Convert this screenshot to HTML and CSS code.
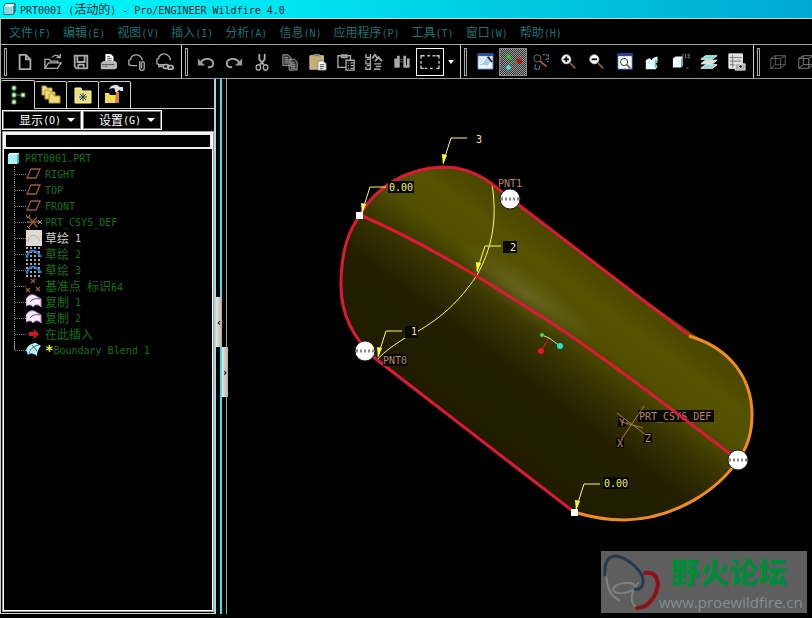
FILE: index.html
```html
<!DOCTYPE html>
<html lang="zh-CN">
<head>
    <meta charset="utf-8">
    <title>PRT0001 (活动的) - Pro/ENGINEER Wildfire 4.0</title>
    <link rel="stylesheet" href="styles.css">
</head>
<body>
    <header class="titlebar">
        <svg class="title-icon" viewBox="0 0 14 14"><path d="M1 4l2-3h10v9l-2 3H1z" fill="#e8ffff" stroke="#245"/><path d="M1.500 4.500h9v8h-9z" fill="#8fd8dc"/><path d="M11 4v9l2-3V1z" fill="#467"/></svg>
        <h1>PRT0001 (<span class="zh">活动的</span>) - Pro/ENGINEER Wildfire 4.0</h1>
    </header>

    <nav class="menubar">
        <button><span class="zh">文件</span>(F)</button>
        <button><span class="zh">编辑</span>(E)</button>
        <button><span class="zh">视图</span>(V)</button>
        <button><span class="zh">插入</span>(I)</button>
        <button><span class="zh">分析</span>(A)</button>
        <button><span class="zh">信息</span>(N)</button>
        <button><span class="zh">应用程序</span>(P)</button>
        <button><span class="zh">工具</span>(T)</button>
        <button><span class="zh">窗口</span>(W)</button>
        <button><span class="zh">帮助</span>(H)</button>
    </nav>

    <div class="toolbar">
        <div class="tool-group">
            <button aria-label="新建"><svg viewBox="0 0 20 20"><path d="M4 2h7l5 5v11H4zM11 2v5h5" stroke-width="2"/></svg></button>
            <button aria-label="打开"><svg viewBox="0 0 20 20"><path d="M1 17V7h5l1 2h8v2M1 17l4-6h14l-4 6zM9 5c2-3 5-3 8-1M18 1v4h-4" stroke-width="1.500"/></svg></button>
            <button aria-label="保存"><svg viewBox="0 0 20 20"><path d="M3 3h14v14H5l-2-2zM6 3v7h8V3M7 17v-4h6v4" stroke-width="2"/></svg></button>
            <button aria-label="打印"><svg viewBox="0 0 20 20"><path d="M6 10V1h6l3 3v6z" fill="#fff" stroke="none"/><path d="M8 4h3M8 6h5M8 8h5" stroke="#555"/><path d="M1 11l3-2h13l2 2v5l-2 2H1z" fill="#bbb" stroke="none"/><path d="M2 13h14" stroke="#444"/><path d="M3 15h2" stroke="#2a2"/><path d="M6 15h2" stroke="#c22"/></svg></button>
            <button aria-label="发送邮件"><svg viewBox="0 0 20 20"><path d="M4 14l-3-1V8l2-1c0-3 3-5 6-5s6 2 7 6M4 14h6M13 9v8c0 3 5 3 5 0v-6c0-2-3-2-3 0v6" stroke-width="1.500"/></svg></button>
            <button aria-label="发送链接"><svg viewBox="0 0 20 20"><path d="M4 13l-3-1V7l2-1c0-3 3-5 6-5s7 3 7 7M4 13h5M3 13v2h4" stroke-width="1.500"/><rect x="8" y="13" width="6" height="4" rx="2" stroke-width="2"/><rect x="13" y="14" width="6" height="4" rx="2" stroke-width="2"/></svg></button>
        </div>
        <div class="tool-group">
            <button aria-label="撤消"><svg viewBox="0 0 20 20"><path d="M4 11c4-7 14-5 14 1 0 3-3 4-6 4" stroke-width="2"/><path d="M1 6v8h8z" fill="#999" stroke="none"/></svg></button>
            <button aria-label="重做"><svg viewBox="0 0 20 20"><path d="M16 11C12 4 2 6 2 12c0 3 3 4 6 4" stroke-width="2"/><path d="M19 6v8h-8z" fill="#999" stroke="none"/></svg></button>
            <button aria-label="剪切"><svg viewBox="0 0 20 20"><path d="M7 1v6l5 6M13 1v6l-5 6" stroke-width="2"/><ellipse cx="6" cy="16" rx="2.500" ry="3" stroke-width="1.500"/><ellipse cx="14" cy="16" rx="2.500" ry="3" stroke-width="1.500"/></svg></button>
            <button aria-label="复制"><svg viewBox="0 0 20 20"><path d="M2 2h6l3 3v9H2zM9 7h6l3 3v9H9z" fill="#333" /><path d="M4 5h4M4 7h4M4 9h4M4 11h4M11 11h4M11 13h5M11 15h5M11 17h5"/></svg></button>
            <button aria-label="粘贴"><svg viewBox="0 0 20 20"><path d="M1 3h15v15H1z" fill="#c4ad70" stroke="#ddd09c"/><path d="M5 4V2h2l1-1 2 1h2v2z" fill="#777"/><path d="M10 9h6l3 3v7h-9z" fill="#fff" stroke="#888"/><path d="M12 13h5M12 15h5M12 17h4" stroke="#445"/></svg></button>
            <button aria-label="选择性粘贴"><svg viewBox="0 0 20 20"><path d="M10 16H1V3h14v5M5 5V2h6v3zM10 8h9v11h-9zM12 11h1M12 14h1M12 17h1M15 11h3M15 14h3M15 17h3" stroke-width="1.500"/></svg></button>
            <button aria-label="再生"><svg viewBox="0 0 20 20"><path d="M1 1v4h5V1M6 4v3H2M1 8v4h5V8M6 11v3H2M1 15v3h5v-3M10 12h8M12 15h6M10 18h7" stroke-width="1.500"/><path d="M8 6l3-4 3 4 2-2M11 9l4-4 4 4" stroke-width="2"/></svg></button>
            <button aria-label="查找"><svg viewBox="0 0 20 20"><path d="M3 6v10M6 3v13M13 3v13M17 6v10M2 15h5M12 15h6" stroke-width="3"/><path d="M8 7h4M8 10h4" stroke="#666"/></svg></button>
            <button class="framed" aria-label="选取框"><svg viewBox="0 0 20 20"><path d="M0 6V3h4M7 3h3M13 3h3M17 3h3v3M20 9v3M20 14v3h-3M13 17h-3M7 17H4M3 17H0v-3M0 12V9" stroke="#ccc" stroke-width="1.500"/></svg></button>
            <button class="caret" aria-label="选取选项"><svg viewBox="0 0 6 4"><path d="M0 0h6L3 4z" fill="#fff" stroke="none"/></svg></button>
        </div>
        <div class="tool-group">
            <button aria-label="重画"><svg viewBox="0 0 20 20"><path d="M2 1h17v17H2z" fill="#eef8ff" stroke="#2857a8"/><path d="M2 2h17" stroke="#2857a8" stroke-width="3"/><path d="M12 5l5 4-4 5-7-1z" fill="#a8d0ea" stroke="none"/><path d="M13 4l5 6" stroke="#223" stroke-width="2"/><path d="M4 6h1M6 8h1M4 10h1M8 6h1M5 13h1" stroke="#38c"/></svg></button>
            <button class="pressed" aria-label="旋转中心"><svg viewBox="0 0 20 20"><path d="M5 5l4 5h7M9 10l-4 5" stroke="#2a4" /><circle cx="5" cy="4" r="2.500" fill="#2c2" stroke="none"/><circle cx="17" cy="9" r="3" fill="#c01010" stroke="none"/><circle cx="5" cy="16" r="2.500" fill="#4dd" stroke="none"/></svg></button>
            <button aria-label="定向模式"><svg viewBox="0 0 20 20"><circle cx="6" cy="6" r="4" stroke="#777"/><path d="M9 9l7 6" stroke="#a65b36" stroke-width="2"/><path d="M12 2h6v5h-4M4 13l-1 5h5l1-5M17 9l2 2" stroke="#89c6f0" stroke-dasharray="2 1"/></svg></button>
            <button aria-label="放大"><svg viewBox="0 0 20 20"><path d="M11 11l6 6" stroke="#8c5944" stroke-width="2"/><circle cx="7" cy="7" r="5" fill="#fff" stroke="#ccc"/><path d="M4 7h6M7 4v6" stroke="#000" stroke-width="2"/></svg></button>
            <button aria-label="缩小"><svg viewBox="0 0 20 20"><path d="M11 11l6 6" stroke="#8c5944" stroke-width="2"/><circle cx="7" cy="7" r="5" fill="#fff" stroke="#ccc"/><path d="M4 7h6" stroke="#000" stroke-width="2"/></svg></button>
            <button aria-label="重新调整"><svg viewBox="0 0 20 20"><path d="M2 1h16v17H2z" fill="#fff" stroke="#2444a0"/><path d="M1 2h18" stroke="#2444a0" stroke-width="3"/><circle cx="9" cy="10" r="4" stroke="#222"/><path d="M12 13l4 4" stroke="#8c5944" stroke-width="2"/></svg></button>
            <button aria-label="重定向"><svg viewBox="0 0 20 20"><path d="M2 8l3-2h2l1 2 3-3 4-1v6l-2 2 2 3-2 3H2z" fill="#e8fffc" stroke="none"/><path d="M12 8v9l3-3-2-2 2-4z" fill="#5bb" stroke="none"/></svg></button>
            <button aria-label="已保存视图"><svg viewBox="0 0 20 20"><path d="M1 6l3-2h8v10l-2 2H1z" fill="#f4ffff" stroke="none"/><path d="M10 7l2-3v10l-2 2z" fill="#59a9a9" stroke="none"/><path d="M12 1v5M15 1v5M19 1v5M17 2h2M17 5h2" stroke="#888"/><path d="M15 16h4l-2 2z" fill="#555" stroke="none"/></svg></button>
            <button aria-label="层"><svg viewBox="0 0 20 20"><path d="M6 3h13l-5 4H1z" fill="#8adada" stroke="#dff"/><path d="M6 8h13l-5 4H1z" fill="#ddd" stroke="#fff"/><path d="M6 13h13l-5 4H1z" fill="#8adada" stroke="#fff"/></svg></button>
            <button aria-label="视图管理器"><svg viewBox="0 0 20 20"><path d="M1 1h15v16H1z" fill="#ddd" stroke="#fff"/><path d="M2 5h13M2 9h13M2 13h13M5 2v14" stroke="#777"/><path d="M8 12h11v7H8z" fill="#aaa" stroke="#eee"/><circle cx="14" cy="15" r="2" fill="#111" stroke="#fff"/></svg></button>
        </div>
        <div class="tool-group">
            <button aria-label="线框"><svg viewBox="0 0 20 20"><path d="M2 6h11v11H2zM7 3h11v10H7zM2 6l5-3M13 6l5-3M13 17l5-4M2 17l5-4" stroke="#666"/></svg></button>
            <button aria-label="隐藏线"><svg viewBox="0 0 20 20"><path d="M2 6h11v11H2zM7 3h11v10H7zM2 6l5-3M13 6l5-3M13 17l5-4M2 17l5-4" stroke="#888"/></svg></button>
        </div>
    </div>

    <main class="workspace">
        <aside class="navigator">
            <div class="tabs">
                <button class="tab active" aria-label="模型树"><svg viewBox="0 0 22 22"><path d="M7 4v14M7 11h8" stroke="#5c8a5c" fill="none"/><path d="M5 2h4v4H5zM5 9h4v4H5zM5 16h4v4H5zM14 9h4v4h-4z" fill="#d6ffd6" stroke="#3a7a3a"/></svg></button>
                <button class="tab" aria-label="文件夹浏览器"><svg viewBox="0 0 22 22"><g fill="#f2dc78" stroke="#b59c3c"><path d="M2 4V2h4l1 2h5v7H2z"/><path d="M5 8V6h4l1 2h5v7H5z"/><path d="M9 12v-2h4l1 2h6v7H9z"/></g></svg></button>
                <button class="tab" aria-label="收藏夹"><svg viewBox="0 0 22 22"><path d="M3 7V4h6l1 3h9v12H3z" fill="#eedf78" stroke="#fff6b0"/><path d="M11 9v8M7 13h8M8 10l6 6M14 10l-6 6" stroke="#1b3f78"/></svg></button>
                <button class="tab" aria-label="连接"><svg viewBox="0 0 22 22"><path d="M1 11V9h4l1 2h7v8H1z" fill="#f2dc50"/><path d="M5 5c2-4 5-4 8-4l3 2h3v4h-2l-2-1-2 2h-2V5L9 4z" fill="#dde3e8"/><path d="M12 8h3v11h-4z" fill="#d97c3c"/></svg></button>
            </div>
            <div class="drop-buttons">
                <button><span class="zh">显示</span>(O)<i class="arrow"></i></button>
                <button><span class="zh">设置</span>(G)<i class="arrow"></i></button>
            </div>
            <div class="tree-panel">
                <input type="text" class="tree-search" aria-label="搜索">
                <div class="tree-root"><svg viewBox="0 0 14 14"><path d="M1 3l2-2h10v10l-2 2H1z" fill="#a8f0f0"/><path d="M11 3l2-2v10l-2 2z" fill="#4aa"/><path d="M1 3h10l2-2H3z" fill="#e8ffff"/></svg>PRT0001.PRT</div>
                <ul class="tree">
                    <li><svg viewBox="0 0 16 16"><path d="M5 3h9l-4 9H1z" class="datum"/></svg>RIGHT</li>
                    <li><svg viewBox="0 0 16 16"><path d="M5 3h9l-4 9H1z" class="datum"/></svg>TOP</li>
                    <li><svg viewBox="0 0 16 16"><path d="M5 3h9l-4 9H1z" class="datum"/></svg>FRONT</li>
                    <li><svg viewBox="0 0 16 16"><path d="M1 8h12M3 3l8 10M11 3L3 13" class="datum"/><path d="M0 1l2 3 2-3M12 6l4 4M16 6l-4 4M1 12l3 3" stroke="#999" fill="none"/></svg>PRT_CSYS_DEF</li>
                    <li class="selected"><svg viewBox="0 0 16 16"><path d="M0 0h16v16H0z" fill="#dedad6"/><path d="M2 12c1-8 8-9 12-1" stroke="#b5a78f" fill="none"/></svg><span class="zh">草绘</span> 1</li>
                    <li><svg viewBox="0 0 16 16"><path d="M0 2h16M0 6h16M0 10h16M0 14h16" stroke="#dde" stroke-width="1.500" stroke-dasharray="2 2"/><path d="M1 12C2 3 10 2 15 11" stroke="#267bd0" stroke-width="2" fill="none"/></svg><span class="zh">草绘</span> 2</li>
                    <li><svg viewBox="0 0 16 16"><path d="M0 2h16M0 6h16M0 10h16M0 14h16" stroke="#dde" stroke-width="1.500" stroke-dasharray="2 2"/><path d="M1 12C2 3 10 2 15 11" stroke="#267bd0" stroke-width="2" fill="none"/></svg><span class="zh">草绘</span> 3</li>
                    <li><svg viewBox="0 0 16 16"><path d="M5 1l4 4M9 1L5 5M0 10l4 4M4 10l-4 4M10 9l4 4M14 9l-4 4" class="datum"/></svg><span><span class="zh">基准点</span> <span class="zh">标识</span>64</span></li>
                    <li><svg viewBox="0 0 16 16"><path d="M0 5c3-5 7-5 10-3l5 3v8c-3-3-6-3-8 0-1-2-3-3-7-1z" fill="#fbeaff" stroke="#b68cc8"/><path d="M4 8c2-3 6-4 10-3" stroke="#555" fill="none"/></svg><span class="zh">复制</span> 1</li>
                    <li><svg viewBox="0 0 16 16"><path d="M0 5c3-5 7-5 10-3l5 3v8c-3-3-6-3-8 0-1-2-3-3-7-1z" fill="#fbeaff" stroke="#b68cc8"/><path d="M4 8c2-3 6-4 10-3" stroke="#555" fill="none"/></svg><span class="zh">复制</span> 2</li>
                    <li><svg viewBox="0 0 16 16"><path d="M3 6h5V3l5 5-5 5v-3H3z" fill="#d01818"/></svg><span class="zh">在此插入</span></li>
                    <li><svg viewBox="0 0 16 16"><path d="M0 8c2-5 6-7 10-7l5 3c-3 3-4 6-4 10-4-3-7-3-9-1z" fill="#b8f2f2"/><path d="M3 11c2-5 5-7 10-8M6 3l5 6" stroke="#377" fill="none"/></svg><span class="flag">*</span>Boundary Blend 1</li>
                </ul>
            </div>
        </aside>
        <div class="sash">
            <button class="sash-left" aria-label="收起">‹</button>
            <button class="sash-right" aria-label="展开">›</button>
        </div>

        <section class="viewport">
            <svg class="model" viewBox="228 79 584 539" preserveAspectRatio="xMinYMin meet">
                <defs>
                    <linearGradient id="body" gradientUnits="userSpaceOnUse" x1="475" y1="435" x2="600" y2="267">
                        <stop offset="0" stop-color="#201c00"/>
                        <stop offset=".35" stop-color="#231f00"/>
                        <stop offset=".55" stop-color="#393600"/>
                        <stop offset=".7" stop-color="#525000"/>
                        <stop offset=".85" stop-color="#555200"/>
                        <stop offset="1" stop-color="#4a4700"/>
                    </linearGradient>
                    <radialGradient id="shine">
                        <stop offset="0" stop-color="#8a8a58" stop-opacity=".35"/>
                        <stop offset="1" stop-color="#8a8a58" stop-opacity="0"/>
                    </radialGradient>
                    <g id="knob">
                        <circle r="10" fill="#fff" stroke="#222"/>
                        <path d="M-9 0H9" stroke="#888" stroke-width="3" stroke-dasharray="2 2"/>
                    </g>
                    <path id="leader" d="M24 0H8L0 25" fill="none" stroke="#ffff50"/>
                    <path id="head" d="M0 27l-1-11 5 1z" fill="#ffff30"/>
                </defs>

                <path d="M376 359C350 336 340 310 341 281C342 250 348 232 360 215C375 188 405 168 443 167C465 167 480 175 492 184L511 199L632 291L702 340C734 354 752 380 752 415C752 430 748 447 738 460C718 490 675 519 624 520C605 520 590 517 574 512Z" fill="url(#body)"/>
                <ellipse cx="525" cy="293" rx="85" ry="22" transform="rotate(35 525 293)" fill="url(#shine)"/>

                <path class="section" d="M492 184C498 222 491 250 477 275C453 312 425 328 405 338C394 345 385 351 378 359"/>
                <path class="edge" d="M574 512L376 359C350 336 340 310 341 281C342 250 348 232 360 215C375 188 405 168 443 167C465 167 480 175 492 184L511 199L690 336"/>

                <use href="#leader" x="443" y="138"/><use href="#head" x="443" y="138"/>
                <use href="#leader" x="362" y="187"/><use href="#head" x="362" y="187"/>
                <use href="#leader" x="477" y="246"/><use href="#head" x="477" y="246"/>
                <use href="#leader" x="378" y="331"/><use href="#head" x="378" y="331"/>
                <use href="#leader" x="576" y="484"/><use href="#head" x="576" y="484"/>

                <g class="tags">
                    <rect x="388" y="181" width="26" height="12"/>
                    <rect x="503" y="241" width="14" height="12"/>
                    <rect x="405" y="326" width="13" height="12"/>
                    <rect x="383" y="354" width="25" height="12"/>
                    <rect x="603" y="477" width="26" height="12"/>
                    <rect x="638" y="410" width="76" height="12"/>
                    <rect x="618" y="417" width="8" height="10"/>
                    <rect x="616" y="438" width="8" height="10"/>
                    <rect x="644" y="433" width="8" height="10"/>
                </g>
                <g class="dims">
                    <text x="476" y="143">3</text>
                    <text x="389" y="191">0.00</text>
                    <text x="510" y="251">2</text>
                    <text x="411" y="335">1</text>
                    <text x="604" y="487">0.00</text>
                </g>
                <g class="names">
                    <text x="498" y="187">PNT1</text>
                    <text x="383" y="364">PNT0</text>
                    <text x="639" y="420">PRT_CSYS_DEF</text>
                    <text x="619" y="426">Y</text>
                    <text x="617" y="447">X</text>
                    <text x="645" y="442">Z</text>
                </g>
                <path class="csys" d="M617 413L646 435M644 406L621 440M622 422L643 428"/>

                <path class="edge" d="M360 215C430 245 500 290 550 322S690 423 738 460"/>
                <path class="edge active" d="M689 336C730 348 752 378 752 415C752 430 748 447 738 460C718 490 675 519 624 520C605 520 590 517 574 512"/>

                <g class="spin">
                    <path d="M549 338L541 351" stroke="#d02020"/>
                    <path d="M542 335L549 338L560 346" stroke="#b8e8c0"/>
                    <circle cx="542" cy="335" r="2" fill="#4dd83c"/>
                    <circle cx="541" cy="351" r="3" fill="#f01028"/>
                    <circle cx="560" cy="346" r="3" fill="#28e0d0"/>
                </g>

                <use href="#knob" x="510" y="199"/>
                <use href="#knob" x="365" y="351"/>
                <use href="#knob" x="738" y="460"/>
                <path class="grip" d="M356 212h7v7h-7zM571 509h7v7h-7z"/>
            </svg>
            <div class="watermark">
                <svg viewBox="0 0 60 62">
                    <g fill="none" stroke-linecap="round">
                        <path d="M5 22C6 38 10 45 18 49" stroke="#808080" stroke-width="2"/>
                        <ellipse cx="23" cy="37" rx="11" ry="5" transform="rotate(-10 23 37)" stroke="#808080" stroke-width="2"/>
                        <path d="M38 57C28 55 29 42 37 32" stroke="#808080" stroke-width="2"/>
                        <path d="M4 24C3 10 8 5 15 5C28 7 44 22 42 32C41 37 38 39 34 38" stroke="#26384c" stroke-width="3"/>
                        <path d="M44 22C58 20 60 35 52 47C47 54 43 57 36 57" stroke="#8e1018" stroke-width="4"/>
                    </g>
                </svg>
                <div class="watermark-text">
                    <strong>野火论坛</strong>
                    <a href="#">www.proewildfire.cn</a>
                </div>
            </div>
        </section>
    </main>
</body>
</html>
```
FILE: styles.css
```css
*,
*::before {
    box-sizing: border-box;
}

body {
    margin: 0;
    min-height: 100vh;
    display: flex;
    flex-direction: column;
    background: #000;
    font: 10px "DejaVu Sans Mono", "Noto Sans CJK SC", monospace;
    overflow-x: hidden;
}

button {
    margin: 0;
    padding: 0;
    border: 0;
    background: none;
    color: inherit;
    font: inherit;
}

svg {
    display: block;
    flex: none;
}

.zh {
    font-family: "Noto Sans CJK SC", sans-serif;
    font-size: 12px;
    line-height: 14px;
}

.titlebar {
    display: flex;
    align-items: center;
    gap: 4px;
    height: 19px;
    padding-left: 3px;
    background: linear-gradient(90deg, #00f8fc, #00e4f0 35%, #00a8d0);
    border-bottom: 1px solid #c8d4c8;
    color: #00282c;
}

.titlebar h1 {
    margin: 0;
    font-size: 10px;
    font-weight: normal;
    white-space: pre;
}

.title-icon {
    width: 13px;
    height: 14px;
}

/* menus */
.menubar {
    display: flex;
    align-items: center;
    gap: 12px;
    height: 26px;
    padding-left: 8px;
    border-left: 1px solid #aaa;
    border-bottom: 1px solid #aaa;
    color: #1d7272;
    white-space: nowrap;
}

/* toolbar */
.toolbar {
    display: flex;
    height: 34px;
    overflow: hidden;
    border-bottom: 1px solid #999;
    border-left: 1px solid #aaa;
}

.tool-group {
    display: flex;
    flex: none;
    align-items: center;
    padding: 0 2px 0 3px;
    border-right: 1px solid #ccc;
}

.tool-group:last-child {
    border-right: 0;
}

.tool-group::before {
    content: "";
    width: 3px;
    height: 28px;
    margin-right: 4px;
    border: 1px solid #aaa;
}

.tool-group button {
    display: flex;
    align-items: center;
    justify-content: center;
    width: 28px;
    height: 28px;
}

.tool-group svg {
    width: 18px;
    height: 18px;
    fill: none;
    stroke: #aaa;
}

.tool-group .framed {
    border: 1px solid #fff;
}

.tool-group .framed svg {
    width: 20px;
    overflow: visible;
}

.tool-group .pressed {
    border: 1px solid #888;
    background: repeating-conic-gradient(#999 0 25%, #333 0 50%) 0 0 / 2px 2px;
}

.tool-group .caret {
    width: 14px;
}

.tool-group .caret svg {
    width: 6px;
    height: 4px;
}

/* model tree */
.workspace {
    display: flex;
    flex: 1;
}

.navigator {
    display: flex;
    flex: none;
    flex-direction: column;
    width: 216px;
    margin-bottom: 4px;
    border-left: 1px solid #ccc;
    border-right: 2px solid #a8dcdc;
    border-bottom: 1px solid #ccc;
}

.tabs {
    display: flex;
    align-items: flex-end;
    height: 30px;
    background: linear-gradient(#ccc, #ccc) bottom / 100% 1px no-repeat;
}

.tab {
    display: flex;
    align-items: center;
    justify-content: center;
    width: 32px;
    height: 28px;
    border: 1px solid #ccc;
    border-left-width: 0;
    border-radius: 2px 2px 0 0;
}

.tab svg {
    width: 22px;
    height: 22px;
}

.tab.active {
    width: 34px;
    height: 29px;
    background: #000;
    border-bottom: 0;
}

.drop-buttons {
    display: flex;
    padding: 1px 1px 0;
}

.drop-buttons button {
    display: flex;
    align-items: center;
    justify-content: flex-end;
    width: 80px;
    height: 20px;
    padding-right: 6px;
    border: 1px solid #fff;
    outline: 1px solid #777;
    outline-offset: -2px;
    color: #fff;
}

.arrow {
    margin-left: 6px;
    border: 4px solid transparent;
    border-top-color: #fff;
    border-bottom: 0;
}

.tree-panel {
    flex: 1;
    margin: 1px 0 1px 1px;
    padding: 1px;
    border: 1px solid #999;
    outline: 1px solid #fff;
    outline-offset: -2px;
    color: #167016;
}

.tree-search {
    display: block;
    width: 100%;
    height: 16px;
    padding: 0 2px;
    border: 2px solid #eee;
    background: #000;
    color: #fff;
    font: inherit;
}

.tree-root {
    display: flex;
    align-items: center;
    gap: 5px;
    height: 16px;
    margin-top: 1px;
    padding-left: 3px;
}

.tree-root svg {
    width: 13px;
    height: 13px;
}

.tree {
    margin: 0 0 0 10px;
    padding: 0;
    list-style: none;
}

.tree li {
    display: flex;
    align-items: center;
    height: 16px;
    border-left: 1px dotted #888;
    white-space: pre;
}

.tree li::before {
    content: "";
    width: 11px;
    border-top: 1px dotted #888;
}

.tree li svg {
    width: 16px;
    height: 16px;
    margin-right: 3px;
}

.tree li:last-child {
    border-image: linear-gradient(#888 50%, transparent 50%) 1;
}

.datum {
    fill: none;
    stroke: #9a5a3c;
    stroke-width: 1.3;
}

.selected {
    color: #d0d0d0;
}

.flag {
    color: #f0ff20;
    font-size: 14px;
    font-weight: bold;
}

/* splitter between tree and graphics */
.sash {
    display: flex;
    flex: none;
    align-items: flex-start;
    width: 12px;
    margin-bottom: 4px;
    background: linear-gradient(90deg, transparent 4px, #48dce8 4px 6px, transparent 6px 10px, #70b8b8 10px 11px, transparent 11px);
}

.sash button {
    width: 6px;
    height: 50px;
    background: linear-gradient(90deg, #ece8e0, #b4b0a8);
    color: #000;
    font-size: 10px;
    font-weight: bold;
}

.sash .sash-left {
    margin-top: 218px;
}

.sash .sash-right {
    margin-top: 268px;
}

/* graphics window */
.viewport {
    position: relative;
    flex: 1;
    min-width: 0;
}

.model {
    width: 100%;
}

.edge {
    fill: none;
    stroke: #e01838;
    stroke-width: 3;
}

.edge.active {
    stroke: #f08c20;
}

.section {
    fill: none;
    stroke: #ffff60;
}

.tags {
    fill: #080800;
}

.dims {
    fill: #f0f080;
}

.names {
    fill: #b8836a;
}

.csys {
    fill: none;
    stroke: #a87c40;
}

.spin path {
    fill: none;
}

.grip {
    fill: #fff;
}

.watermark {
    position: absolute;
    right: 5px;
    bottom: 5px;
    display: flex;
    width: 206px;
    height: 62px;
    background: #5e5e5e;
}

.watermark > svg {
    width: 60px;
    height: 62px;
}

.watermark-text {
    display: flex;
    flex-direction: column;
    margin-left: -2px;
}

.watermark strong {
    margin-left: 12px;
    color: #008c3a;
    font: 900 29px/41px "Noto Sans CJK SC", sans-serif;
}

.watermark a {
    color: #829090;
    font: 15px/21px "Open Sans", sans-serif;
    text-decoration: none;
}
```
